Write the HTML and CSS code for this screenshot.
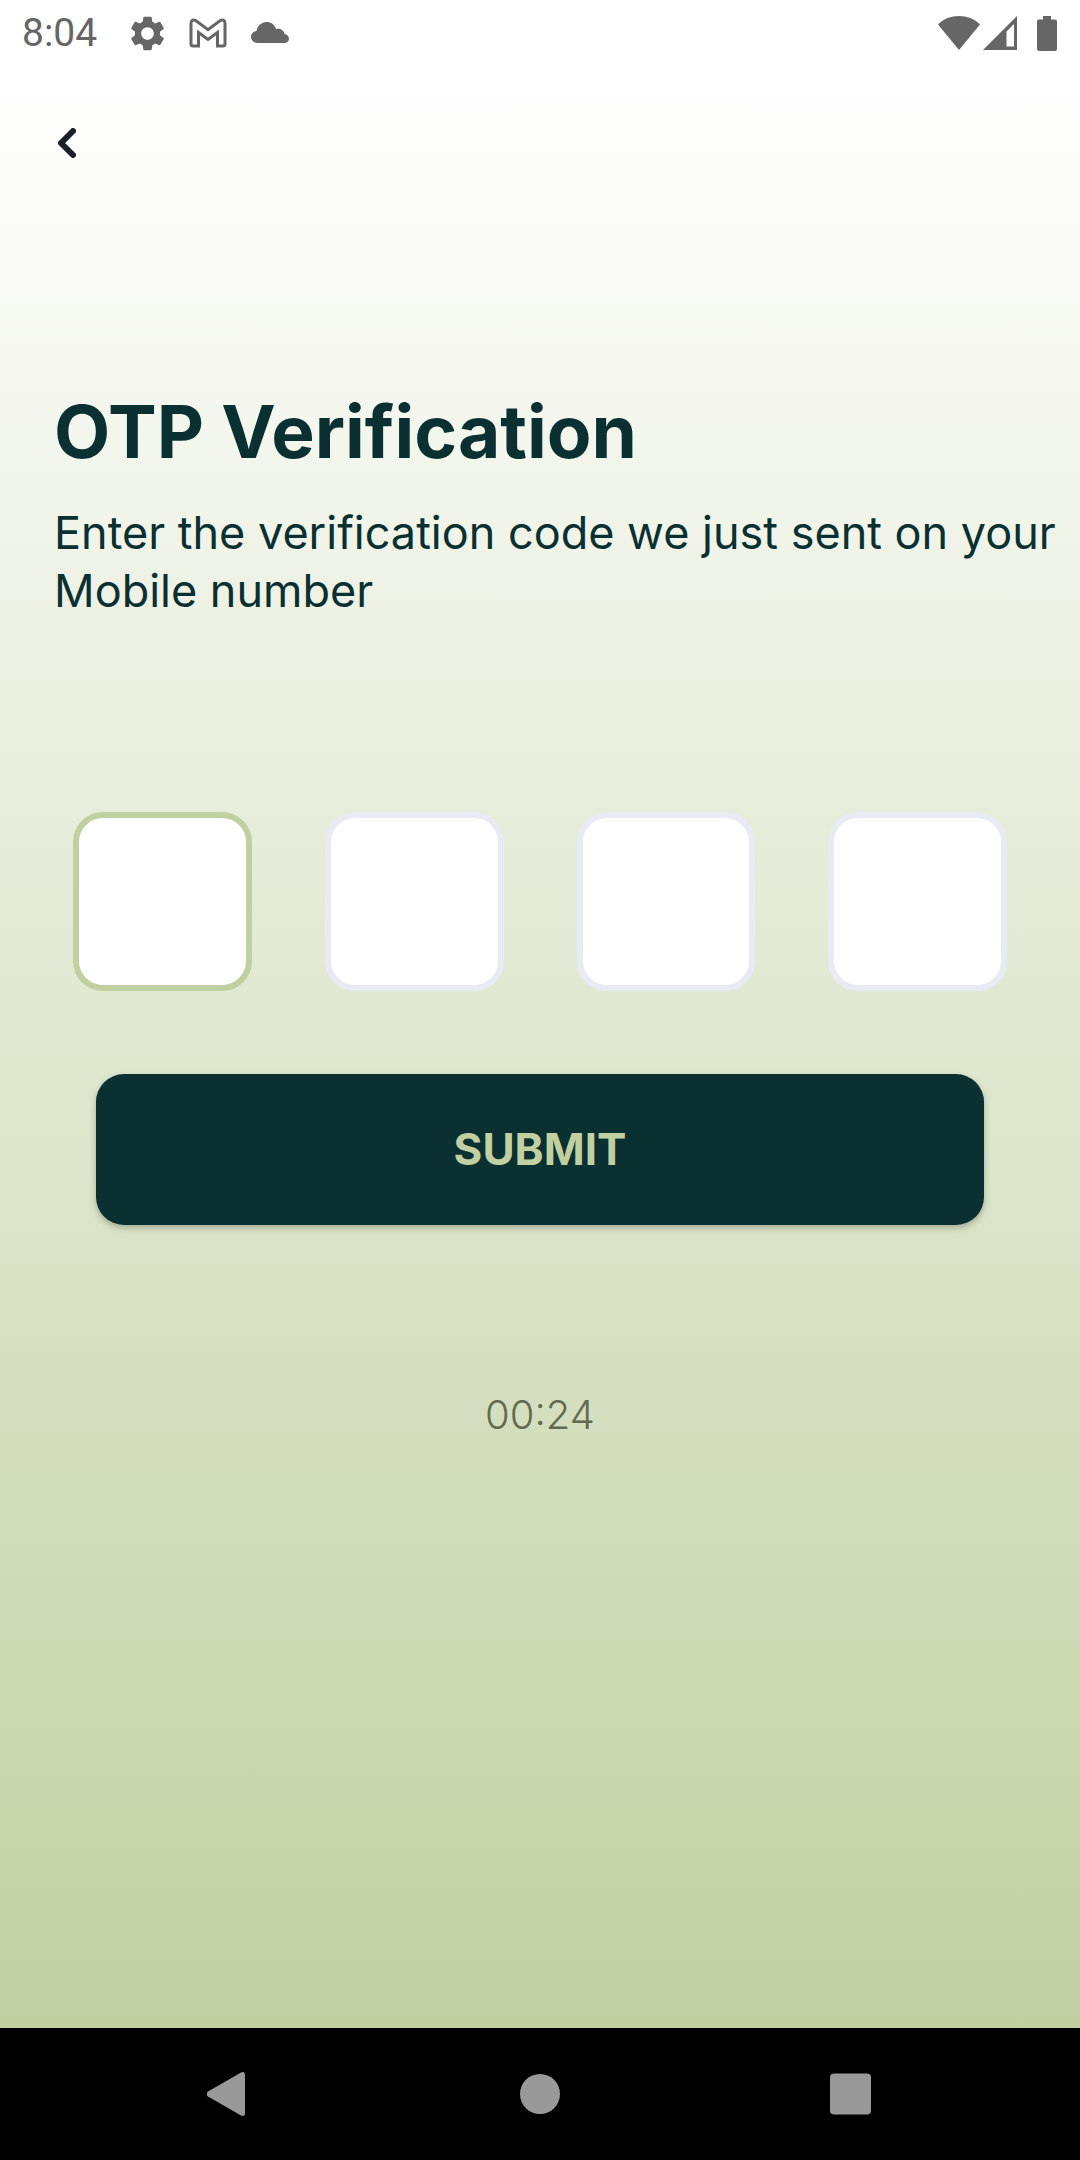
FILE: index.html
```html
<!DOCTYPE html>
<html lang="en">
<head>
<meta charset="utf-8">
<meta name="viewport" content="width=device-width, initial-scale=1">
<title>OTP Verification</title>
<link rel="stylesheet" href="styles.css">
</head>
<body>
<div class="screen">
  <div class="app">
    <header class="status-bar">
      <div class="status-left">
        <time class="clock">8:04</time>
        <svg class="status-icon" viewBox="2 2 20 20" aria-hidden="true"><path d="M19.14 12.94c.04-.3.06-.61.06-.94 0-.32-.02-.64-.07-.94l2.03-1.58c.18-.14.23-.41.12-.61l-1.92-3.32c-.12-.22-.37-.29-.59-.22l-2.39.96c-.5-.38-1.03-.7-1.62-.94l-.36-2.54c-.04-.24-.24-.41-.48-.41h-3.84c-.24 0-.43.17-.47.41l-.36 2.54c-.59.24-1.13.57-1.62.94l-2.39-.96c-.22-.08-.47 0-.59.22L2.74 8.87c-.12.21-.08.47.12.61l2.03 1.58c-.05.3-.09.63-.09.94s.02.64.07.94l-2.03 1.58c-.18.14-.23.41-.12.61l1.92 3.32c.12.22.37.29.59.22l2.39-.96c.5.38 1.03.7 1.62.94l.36 2.54c.05.24.24.41.48.41h3.84c.24 0 .44-.17.47-.41l.36-2.54c.59-.24 1.13-.56 1.62-.94l2.39.96c.22.08.47 0 .59-.22l1.92-3.32c.12-.22.07-.47-.12-.61l-2.01-1.58zM12 15.6c-1.98 0-3.6-1.62-3.6-3.6s1.62-3.6 3.6-3.6 3.6 1.62 3.6 3.6-1.62 3.6-3.6 3.6z"/></svg>
        <svg class="status-icon mail" viewBox="0 0 38 30" aria-hidden="true"><path d="M2 5.500C2 2 4.600 1 7 2.800L19 11.700L31 2.800C33.400 1 36 2 36 5.500V26Q36 28 34 28H28.500V14.500L19 21.500L9.500 14.500V28H4Q2 28 2 26Z"/></svg>
        <svg class="status-icon cloud" viewBox="0 0 38 22" aria-hidden="true"><path d="M7 21C3 21 0 18.500 0 15C0 11.600 2.400 9.400 5.500 9C6.600 3.700 10.500 0 15.500 0C20 0 23.500 2.600 25 6.900C29.500 6.200 33 8.400 33.600 12C36 12.400 38 14.200 38 16.700C38 19.200 36 21 33.300 21Z"/></svg>
      </div>
      <div class="status-right">
        <svg class="wifi" viewBox="0 0 42 34" aria-hidden="true"><path d="M21 34L0 8.500C11 -2.800 31 -2.800 42 8.500Z"/></svg>
        <svg class="signal" viewBox="0 0 34 34" aria-hidden="true"><path fill-rule="evenodd" d="M34 0V34H0ZM31 8L23.500 15.500V30.500H31Z"/></svg>
        <svg class="battery" viewBox="0 0 20 35" aria-hidden="true"><path d="M6 0H14V3.500H18Q20 3.500 20 5.500V33Q20 35 18 35H2Q0 35 0 33V5.500Q0 3.500 2 3.500H6Z"/></svg>
      </div>
    </header>

    <main class="content">
      <button class="back" type="button" aria-label="Back">
        <svg viewBox="0 0 18 30" aria-hidden="true"><path d="M15 3L3 15L15 27"/></svg>
      </button>
      <h1 class="title">OTP Verification</h1>
      <p class="hint">Enter the verification code we just sent on your Mobile number</p>
      <form class="otp-form">
        <div class="digits">
          <input class="digit active" type="text" inputmode="numeric" maxlength="1" aria-label="Digit 1">
          <input class="digit" type="text" inputmode="numeric" maxlength="1" aria-label="Digit 2">
          <input class="digit" type="text" inputmode="numeric" maxlength="1" aria-label="Digit 3">
          <input class="digit" type="text" inputmode="numeric" maxlength="1" aria-label="Digit 4">
        </div>
        <button class="submit" type="submit">SUBMIT</button>
      </form>
      <time class="timer">00:24</time>
    </main>
  </div>

  <nav class="nav-bar" aria-label="System">
    <button class="nav-button" type="button" aria-label="Back"><svg viewBox="0 0 44 44" aria-hidden="true"><path d="M1 19.500L34 .5Q38 -1 38 3V41Q38 45 34 43.500L1 24.500Q-2 22 1 19.500Z"/></svg></button>
    <button class="nav-button" type="button" aria-label="Home"><svg viewBox="0 0 44 44" aria-hidden="true"><circle cx="22" cy="22" r="20"/></svg></button>
    <button class="nav-button" type="button" aria-label="Recent apps"><svg viewBox="0 0 44 44" aria-hidden="true"><rect x="1" y="1.500" width="41" height="41" rx="4"/></svg></button>
  </nav>
</div>
</body>
</html>
```

FILE: styles.css
```css
* {
  box-sizing: border-box;
}

body {
  margin: 0;
  font-family: Inter, "Open Sans", sans-serif;
  color: #0b3031;
}

button {
  border: 0;
  padding: 0;
  background: none;
  font: inherit;
  color: inherit;
}

svg {
  display: block;
}

.screen {
  min-height: 100vh;
  display: flex;
  flex-direction: column;
}

.app {
  flex: 1;
  display: flex;
  flex-direction: column;
  background: linear-gradient(#ffffff, #ffffff 66px, #c1d0a1);
}

.status-bar {
  height: 66px;
  padding: 0 23px 0 22px;
  display: flex;
  align-items: center;
  justify-content: space-between;
  fill: #666666;
  color: #666666;
}

.status-left,
.status-right {
  display: flex;
  align-items: center;
}

.status-left {
  gap: 24px;
}

.clock {
  margin-right: 9px;
  font: 400 39px/48px Roboto, sans-serif;
}

.status-icon {
  width: 35px;
  height: 35px;
}

.mail {
  width: 38px;
  height: 30px;
  fill: none;
  stroke: #666666;
  stroke-width: 3;
}

.cloud {
  width: 38px;
  height: 22px;
}

.wifi {
  width: 42px;
  height: 34px;
  margin-right: 3px;
}

.signal {
  width: 34px;
  height: 34px;
  margin-right: 20px;
}

.battery {
  width: 20px;
  height: 35px;
}

.content {
  flex: 1;
  display: flex;
  flex-direction: column;
}

.back {
  align-self: flex-start;
  margin: 48px 44px 0;
  padding: 14px;
}

.back svg {
  width: 18px;
  height: 30px;
  fill: none;
  stroke: #1c2029;
  stroke-width: 6;
  stroke-linecap: round;
  stroke-linejoin: round;
}

.title {
  margin: 216px 0 0 54px;
  font-size: 73px;
  font-weight: 700;
  line-height: 88px;
}

.hint {
  margin: 28px 0 0 54px;
  font-size: 45px;
  line-height: 58px;
}

.otp-form {
  display: flex;
  flex-direction: column;
  padding: 0 73px;
  margin-top: 192px;
}

.digits {
  display: flex;
  gap: 73px;
}

.digit {
  flex: 1;
  min-width: 0;
  aspect-ratio: 1;
  border: 6px solid #e8ebf4;
  border-radius: 30px;
  background: #ffffff;
  font: 500 64px Inter, sans-serif;
  text-align: center;
  color: inherit;
}

.digit.active {
  border-color: #c1d0a1;
}

.submit {
  margin: 83px 23px 0;
  height: 151px;
  border-radius: 28px;
  background: #0b3031;
  color: #c1d0a1;
  font-size: 44px;
  font-weight: 700;
  box-shadow: 0 3px 6px rgba(0, 0, 0, 0.25);
}

.timer {
  align-self: center;
  margin-top: 165px;
  font-size: 40px;
  font-weight: 300;
  line-height: 50px;
  color: #626b51;
}

.nav-bar {
  height: 132px;
  padding: 0 74px;
  display: flex;
  align-items: center;
  background: #000000;
}

.nav-button {
  flex: 1;
  display: flex;
  justify-content: center;
}

.nav-button svg {
  width: 44px;
  height: 44px;
  fill: #999999;
}
```
